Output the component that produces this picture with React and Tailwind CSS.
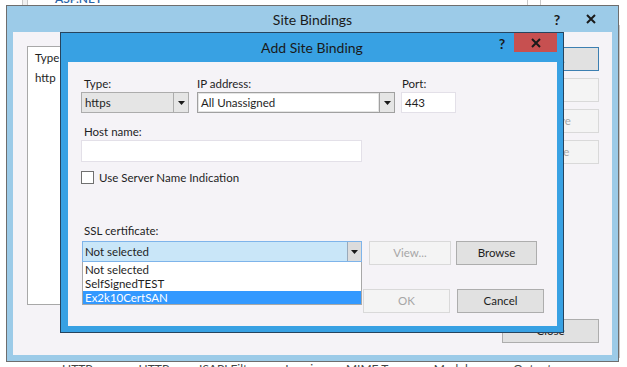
import React from "react";

const font = "font-['Lato','Open_Sans',sans-serif]";

function Arrow() {
  return (
    <svg width="7" height="4" viewBox="0 0 7 4">
      <path d="M0 0h7L3.5 4z" fill="#1a1a1a" />
    </svg>
  );
}

function CloseGlyph({ size = 10, stroke = 2 }) {
  return (
    <svg width={size} height={size} viewBox="0 0 10 10">
      <path d="M1 1l8 8M9 1l-8 8" stroke="#1a1a1a" strokeWidth={stroke} />
    </svg>
  );
}

function Button({ children, className = "", disabled = false, focus = false }) {
  return (
    <div
      className={
        "h-[24px] flex items-center justify-center text-[11.5px] border " +
        (disabled
          ? "bg-[#f4f4f4] border-[#d9d9d9] text-[#a6a6a6] "
          : focus
          ? "bg-[#e1e1e1] border-[#3c7fb1] text-[#1e1e1e] "
          : "bg-[#e1e1e1] border-[#adadad] text-[#1e1e1e] ") +
        className
      }
    >
      {children}
    </div>
  );
}

function Label({ children, className = "" }) {
  return <div className={"h-4 leading-4 text-[11.5px] text-[#1e1e1e] " + className}>{children}</div>;
}

function SiteBindings() {
  return (
    <div className="absolute left-[6px] top-[5px] w-[613px] h-[357px] border border-[#6e6e6e] bg-[#9ccbe8] flex flex-col">
      {/* title bar */}
      <div className="h-[26px] relative flex items-center justify-end pr-[6px]">
        <div className="absolute inset-0 flex items-center justify-center text-[14px] text-[#1a1a1a]">
          Site Bindings
        </div>
        <div className="relative w-[26px] h-full flex items-center justify-center text-[14px] font-bold text-[#1a1a1a]">?</div>
        <div className="relative w-[42px] h-full flex items-center justify-center">
          <CloseGlyph />
        </div>
      </div>

      {/* body */}
      <div className="flex-1 mx-[6px] mb-[6px] bg-[#f5f3f7] flex pt-[14px] pl-[14px] pr-[13px] pb-[12px]">
        <div className="flex-1 h-[259px] mr-[12px] bg-white border border-[#a8a8a8] text-[11.5px] text-[#1e1e1e]">
          <div className="h-[22px] flex items-center pl-[7px] gap-[40px]">
            <span>Type</span>
            <span>Host Name</span>
            <span>Port</span>
            <span>IP Address</span>
          </div>
          <div className="h-[18px] flex items-center pl-[7px]">http</div>
        </div>

        <div className="w-[97px] flex flex-col justify-between">
          <div className="flex flex-col gap-[7px] mt-[1px]">
            <Button focus>Add...</Button>
            <Button disabled>Edit...</Button>
            <Button disabled>Remove</Button>
            <Button disabled>Browse</Button>
          </div>
          <Button>Close</Button>
        </div>
      </div>
    </div>
  );
}

function AddSiteBinding() {
  return (
    <div className="absolute left-[60px] top-[32px] w-[504px] h-[301px] border border-[#26445e] bg-[#38a1e3] flex flex-col">
      {/* title bar */}
      <div className="h-[29px] relative flex items-start justify-end pr-[6px]">
        <div className="absolute inset-0 flex items-center justify-center text-[14px] text-[#1a1a1a]">
          Add Site Binding
        </div>
        <div className="relative w-[24px] h-[20px] flex items-center justify-center text-[14px] font-bold text-[#1a1a1a]">?</div>
        <div className="relative w-[43px] h-[19px] bg-[#c75050] flex items-center justify-center">
          <CloseGlyph />
        </div>
      </div>

      {/* content */}
      <div className="flex-1 ml-[7px] mr-[6px] mb-[6px] bg-[#f5f3f7] pl-[13px] pt-[14px] flex flex-col text-[11.5px] text-[#1e1e1e]">
        <div className="flex">
          <div className="w-[108px]">
            <Label className="pl-[3px]">Type:</Label>
            <div className="h-[21px] flex border border-[#acacac] bg-[#e5e5e5]">
              <div className="flex-1 flex items-center pl-[3px]">https</div>
              <div className="w-[15px] border-l border-[#acacac] flex items-center justify-center">
                <Arrow />
              </div>
            </div>
          </div>
          <div className="w-[198px] ml-[8px]">
            <Label>IP address:</Label>
            <div className="h-[21px] flex border border-[#a0a0a0] bg-[#e5e5e5]">
              <div className="flex-1 flex items-center pl-[2px] m-[1px] bg-white">All Unassigned</div>
              <div className="w-[15px] border-l border-[#a0a0a0] flex items-center justify-center">
                <Arrow />
              </div>
            </div>
          </div>
          <div className="w-[55px] ml-[6px]">
            <Label className="pl-[1px]">Port:</Label>
            <div className="h-[21px] flex items-center pl-[3px] border border-[#e3e0e8] bg-white">443</div>
          </div>
        </div>

        <Label className="mt-[11px] pl-[3px]">Host name:</Label>
        <div className="w-[281px] h-[22px] border border-[#e3e0e8] bg-white"></div>

        <div className="mt-[9px] h-[13px] flex items-center">
          <div className="w-[13px] h-[13px] border border-[#707070] bg-white"></div>
          <span className="ml-[5px]">Use Server Name Indication</span>
        </div>

        <Label className="mt-[39px] pl-[3px]">SSL certificate:</Label>
        <div className="mt-[2px] flex items-start">
          <div className="relative w-[280px] ml-[1px] h-[21px] flex border border-[#7eb4ea] bg-[#c9e6f8]">
            <div className="flex-1 flex items-center pl-[2px]">Not selected</div>
            <div className="w-[14px] bg-[#dcdcdc] border-l border-[#9ab] flex items-center justify-center">
              <Arrow />
            </div>
            <div className="absolute left-[-1px] right-[-1px] top-[20px] h-[43px] bg-white border border-t-0 border-[#a8a8a8] pt-[1px]">
              <div className="h-[14px] leading-[14px] pl-[2px]">Not selected</div>
              <div className="h-[14px] leading-[14px] pl-[2px]">SelfSignedTEST</div>
              <div className="h-[13px] leading-[13px] pl-[2px] bg-[#3399ff] text-white">Ex2k10CertSAN</div>
            </div>
          </div>
          <Button disabled className="w-[82px] ml-[7px]">View...</Button>
          <Button className="w-[81px] ml-[5px]">Browse</Button>
        </div>

        <div className="mt-[24px] flex justify-end pr-[13px] gap-[7px]">
          <Button disabled className="w-[87px]">OK</Button>
          <Button className="w-[87px]">Cancel</Button>
        </div>
      </div>
    </div>
  );
}

export default function App() {
  return (
    <div className={"relative w-[627px] h-[367px] overflow-hidden bg-white flex flex-col " + font}>
      {/* IIS Manager peeking behind the dialogs */}
      <div className="h-[5px] overflow-hidden flex">
        <div className="ml-[22px] w-[6px] h-full border-x border-[#c8c8c8] bg-[#f0f0f0]"></div>
        <div className="ml-[27px] -mt-[10px] text-[12px] font-semibold text-[#2a64a8]">ASP.NET</div>
        <div className="ml-auto mr-[86px] w-[14px] h-full border-x border-[#c8c8c8]"></div>
      </div>
      <div className="flex-1 flex justify-end">
        <div className="w-[8px] border-l border-[#c8c8c8] mt-[20px]"></div>
      </div>
      <div className="h-[9px] flex items-start pt-[4px] text-[12px] leading-[14px] text-[#444] overflow-hidden">
        <span className="ml-[62px]">HTTP</span>
        <span className="ml-[46px]">HTTP</span>
        <span className="ml-[30px]">ISAPI Filters</span>
        <span className="ml-[22px]">Logging</span>
        <span className="ml-[20px]">MIME Types</span>
        <span className="ml-[22px]">Modules</span>
        <span className="ml-[34px]">Output</span>
      </div>

      <SiteBindings />
      <AddSiteBinding />
    </div>
  );
}
